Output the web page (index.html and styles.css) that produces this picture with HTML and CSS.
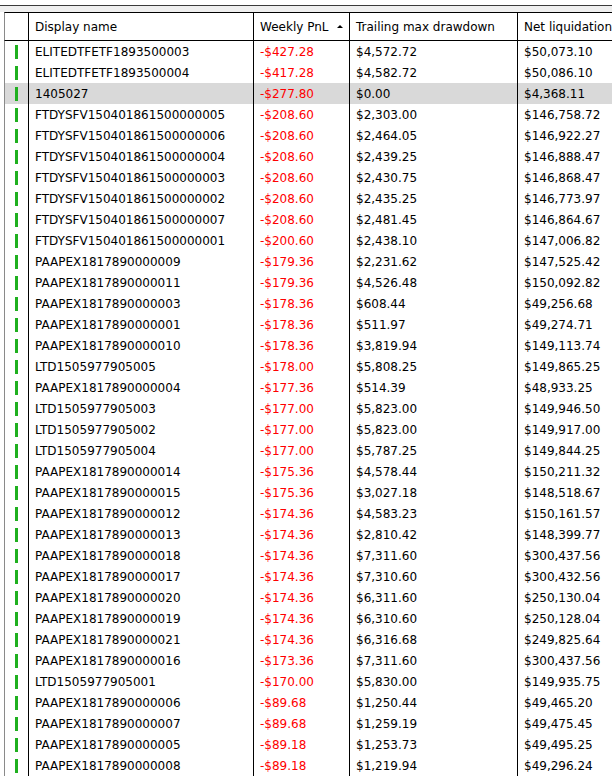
FILE: index.html
```html
<!DOCTYPE html>
<html>
<head>
<meta charset="utf-8">
<link rel="stylesheet" href="styles.css">
</head>
<body>
<div class="topgap"></div>
<div class="band"></div>
<div class="viewport">
<table class="grid">
  <colgroup>
    <col class="c0"><col class="c1"><col class="c2"><col class="c3"><col class="c4">
  </colgroup>
  <thead>
    <tr>
      <th></th>
      <th>Display name</th>
      <th><span class="sorted">Weekly PnL<span class="arrow"></span></span></th>
      <th>Trailing max drawdown</th>
      <th>Net liquidation</th>
    </tr>
  </thead>
  <tbody id="rows"></tbody>
</table>
</div>
<script>
var data = [
["ELITEDTFETF1893500003","-$427.28","$4,572.72","$50,073.10"],
["ELITEDTFETF1893500004","-$417.28","$4,582.72","$50,086.10"],
["1405027","-$277.80","$0.00","$4,368.11",1],
["FTDYSFV150401861500000005","-$208.60","$2,303.00","$146,758.72"],
["FTDYSFV150401861500000006","-$208.60","$2,464.05","$146,922.27"],
["FTDYSFV150401861500000004","-$208.60","$2,439.25","$146,888.47"],
["FTDYSFV150401861500000003","-$208.60","$2,430.75","$146,868.47"],
["FTDYSFV150401861500000002","-$208.60","$2,435.25","$146,773.97"],
["FTDYSFV150401861500000007","-$208.60","$2,481.45","$146,864.67"],
["FTDYSFV150401861500000001","-$200.60","$2,438.10","$147,006.82"],
["PAAPEX1817890000009","-$179.36","$2,231.62","$147,525.42"],
["PAAPEX1817890000011","-$179.36","$4,526.48","$150,092.82"],
["PAAPEX1817890000003","-$178.36","$608.44","$49,256.68"],
["PAAPEX1817890000001","-$178.36","$511.97","$49,274.71"],
["PAAPEX1817890000010","-$178.36","$3,819.94","$149,113.74"],
["LTD1505977905005","-$178.00","$5,808.25","$149,865.25"],
["PAAPEX1817890000004","-$177.36","$514.39","$48,933.25"],
["LTD1505977905003","-$177.00","$5,823.00","$149,946.50"],
["LTD1505977905002","-$177.00","$5,823.00","$149,917.00"],
["LTD1505977905004","-$177.00","$5,787.25","$149,844.25"],
["PAAPEX1817890000014","-$175.36","$4,578.44","$150,211.32"],
["PAAPEX1817890000015","-$175.36","$3,027.18","$148,518.67"],
["PAAPEX1817890000012","-$174.36","$4,583.23","$150,161.57"],
["PAAPEX1817890000013","-$174.36","$2,810.42","$148,399.77"],
["PAAPEX1817890000018","-$174.36","$7,311.60","$300,437.56"],
["PAAPEX1817890000017","-$174.36","$7,310.60","$300,432.56"],
["PAAPEX1817890000020","-$174.36","$6,311.60","$250,130.04"],
["PAAPEX1817890000019","-$174.36","$6,310.60","$250,128.04"],
["PAAPEX1817890000021","-$174.36","$6,316.68","$249,825.64"],
["PAAPEX1817890000016","-$173.36","$7,311.60","$300,437.56"],
["LTD1505977905001","-$170.00","$5,830.00","$149,935.75"],
["PAAPEX1817890000006","-$89.68","$1,250.44","$49,465.20"],
["PAAPEX1817890000007","-$89.68","$1,259.19","$49,475.45"],
["PAAPEX1817890000005","-$89.18","$1,253.73","$49,495.25"],
["PAAPEX1817890000008","-$89.18","$1,219.94","$49,296.24"]
];
var tb = document.getElementById("rows");
var html = "";
for (var i = 0; i < data.length; i++) {
  var d = data[i];
  html += '<tr' + (d[4] ? ' class="sel"' : '') + '><td><span class="status"></span></td><td>' + d[0] +
    '</td><td class="neg">' + d[1] + '</td><td>' + d[2] + '</td><td>' + d[3] + '</td></tr>';
}
tb.innerHTML = html;
</script>
</body>
</html>
```

FILE: styles.css
```css
html, body {
  margin: 0;
  padding: 0;
  background: #ffffff;
  overflow: hidden;
}
body {
  font-family: "DejaVu Sans", "Liberation Sans", sans-serif;
  font-size: 12px;
  color: #000;
  width: 612px;
  height: 779px;
}
.topgap {
  height: 5px;
  background: #fff;
}
.band {
  height: 6px;
  border-top: 1px solid #3a3a3a;
  background: #efefef;
}
.viewport {
  width: 612px;
  overflow: hidden;
}
.grid {
  margin-left: 4px;
  border-collapse: separate;
  border-spacing: 0;
  table-layout: fixed;
  width: 650px;
}
.c0 { width: 24px; }
.c1 { width: 225px; }
.c2 { width: 96px; }
.c3 { width: 168px; }
.c4 { width: 137px; }
.grid th, .grid td {
  box-sizing: border-box;
  border-left: 1px solid #000;
  padding: 0 0 0 6px;
  text-align: left;
  white-space: nowrap;
  overflow: hidden;
}
.grid th:first-child, .grid td:first-child {
  border-left-color: #8a8a8a;
  padding: 0;
}
.grid th {
  font-weight: normal;
  height: 29px;
  border-top: 1px solid #000;
  border-bottom: 1px solid #000;
  vertical-align: middle;
}
.grid td {
  height: 21px;
  vertical-align: middle;
}
.grid tr.sel td {
  background: #d9d9d9;
}
.neg {
  color: #ff0000;
}
.status {
  display: block;
  width: 3px;
  height: 14px;
  margin-left: 10px;
  background: #1fb01f;
}
.sorted {
  display: inline-flex;
  align-items: center;
}
.arrow {
  display: inline-block;
  width: 0;
  height: 0;
  margin-left: 9px;
  margin-bottom: 1px;
  border-left: 3px solid transparent;
  border-right: 3px solid transparent;
  border-bottom: 3px solid #000;
}
```
